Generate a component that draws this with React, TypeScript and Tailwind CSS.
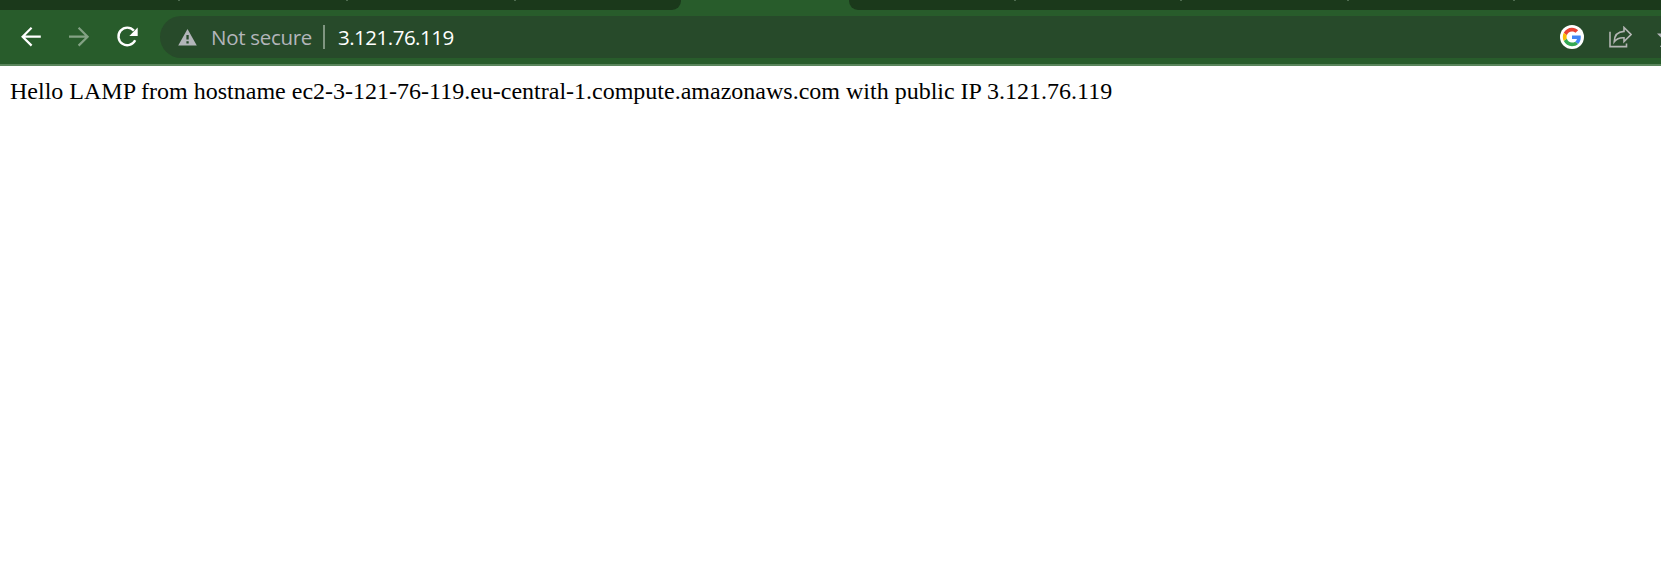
const tick = 'h-px w-0.5 shrink-0 bg-[#4e6b4f]';

function InactiveTabs({ side }: { side: 'left' | 'right' }) {
  if (side === 'left') {
    return (
      <div className="flex h-2.5 w-[681px] shrink-0 rounded-br-[9px] bg-[#1b391b] pl-[178px]">
        <i className={tick} />
        <i className={`${tick} ml-[166px]`} />
        <i className={`${tick} ml-[166px]`} />
      </div>
    );
  }
  return (
    <div className="flex h-2.5 grow rounded-bl-[9px] bg-[#1b391b] pl-[165px]">
      <i className={tick} />
      <i className={`${tick} ml-[164px]`} />
      <i className={`${tick} ml-[165px]`} />
      <i className={`${tick} ml-[164px]`} />
    </div>
  );
}

function GoogleIcon() {
  return (
    <svg className="size-6 shrink-0" viewBox="0 0 24 24">
      <circle cx="12" cy="12" r="12" fill="#fff" />
      <g transform="translate(2.8 2.8) scale(0.383)">
        <path fill="#EA4335" d="M24 9.5c3.54 0 6.71 1.22 9.21 3.6l6.85-6.85C35.9 2.38 30.47 0 24 0 14.62 0 6.51 5.38 2.56 13.22l7.98 6.19C12.43 13.72 17.74 9.5 24 9.5z" />
        <path fill="#4285F4" d="M46.98 24.55c0-1.57-.15-3.09-.38-4.55H24v9.02h12.94c-.58 2.96-2.26 5.48-4.78 7.18l7.73 6c4.51-4.18 7.09-10.36 7.09-17.65z" />
        <path fill="#FBBC05" d="M10.53 28.59c-.48-1.45-.76-2.99-.76-4.59s.27-3.14.76-4.59l-7.98-6.19C.92 16.46 0 20.12 0 24c0 3.88.92 7.54 2.56 10.78l7.97-6.19z" />
        <path fill="#34A853" d="M24 48c6.48 0 11.93-2.13 15.89-5.81l-7.73-6c-2.15 1.45-4.92 2.3-8.16 2.3-6.26 0-11.57-4.22-13.47-9.91l-7.98 6.19C6.51 42.62 14.62 48 24 48z" />
      </g>
    </svg>
  );
}

export default function App() {
  return (
    <div className="flex h-[586px] w-full flex-col overflow-hidden bg-white">
      <div className="flex h-2.5 shrink-0 bg-[#285c2b]">
        <InactiveTabs side="left" />
        <div className="w-[168px] shrink-0" />
        <InactiveTabs side="right" />
      </div>
      <div className="flex h-14 shrink-0 items-start border-b-2 border-[#5a855c] bg-[#285c2b] pt-1.5">
        <svg className="ml-5 mt-[9px] size-6 shrink-0" viewBox="0 0 24 24" fill="none" stroke="#fff" strokeWidth="2.2">
          <path d="M20.8 11.7H2.5M11.6 2.8l-9 8.9 9 8.9" />
        </svg>
        <svg className="ml-6 mt-[9px] size-6 shrink-0" viewBox="0 0 24 24" fill="none" stroke="#83a284" strokeWidth="2.2">
          <path d="M1 11.7h18.5M10.6 2.8l9 8.9-9 8.9" />
        </svg>
        <svg className="ml-6 mt-[9px] size-6 shrink-0" viewBox="0 0 24 24" fill="none">
          <path d="M17.9 5.6a8.8 8.8 0 1 0 1.3 9.6" stroke="#fff" strokeWidth="2.4" />
          <path d="M21.7 2.6v8.4h-8.4z" fill="#fff" />
        </svg>
        <div className="ml-5 flex h-[42px] grow items-center overflow-hidden rounded-l-full bg-[#274a2a] pl-[18px] font-['Open_Sans',sans-serif]">
          <svg className="h-[17px] w-[19px] shrink-0" viewBox="0 0 19 17">
            <path d="M9.5 0 18.8 16.5H.2z" fill="#b3b5ba" />
            <path d="M8.4 6h2.3v4.4H8.4zM8.4 12.2h2.3v2.3H8.4z" fill="#274a2a" />
          </svg>
          <span className="ml-3.5 w-[112px] shrink-0 whitespace-nowrap text-[20.5px] leading-6 tracking-[-0.3px] text-[#b3b5ba]">Not secure</span>
          <div className="h-6 w-0.5 shrink-0 bg-[#809681]" />
          <span className="ml-[13px] shrink-0 whitespace-nowrap text-[20.5px] leading-6 tracking-[-0.5px] text-white">3.121.76.119</span>
          <div className="grow" />
          <GoogleIcon />
          <svg className="ml-[25px] h-[22px] w-[23px] shrink-0" viewBox="0 0 23 22" fill="none" stroke="#b3b5b3" strokeWidth="1.6">
            <path d="M1 5.8V20.6h16.5V17.4" />
            <path d="M5.2 15.8C5.4 9.7 8.6 5.7 15 5.4V1.5l7 7-7 7v-3.8c-4.2-.2-7.4.8-9.8 4.1z" />
          </svg>
          <svg className="ml-[25px] h-[22px] w-1 shrink-0" viewBox="0 0 4 22">
            <path d="M0 7.5h4V11.5zM4 19v2H3z" fill="#b3b5ba" />
          </svg>
        </div>
      </div>
      <main className="pl-2.5 pt-[11px] font-['Liberation_Serif',serif] text-[24px] leading-7 text-black">
        Hello LAMP from hostname ec2-3-121-76-119.eu-central-1.compute.amazonaws.com with public IP 3.121.76.119
      </main>
    </div>
  );
}
